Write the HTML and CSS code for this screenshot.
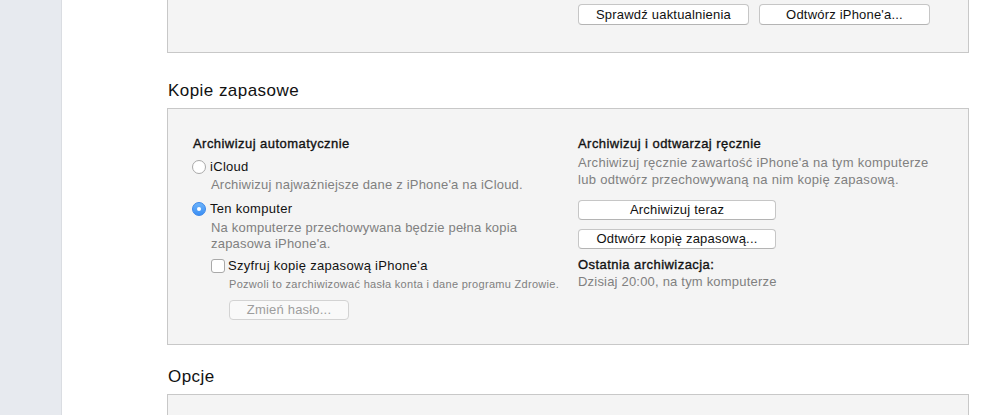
FILE: index.html
```html
<!DOCTYPE html>
<html lang="pl">
<head>
<meta charset="utf-8">
<title>Kopie zapasowe</title>
<link rel="stylesheet" href="styles.css">
</head>
<body>
<div class="app">
  <aside class="sidebar"></aside>
  <main class="content">
    <section class="box box-top">
      <div class="top-buttons">
        <button class="btn btn-top">Sprawdź uaktualnienia</button>
        <button class="btn btn-top">Odtwórz iPhone'a...</button>
      </div>
    </section>

    <h2 class="heading heading-first">Kopie zapasowe</h2>
    <section class="box backup">
      <div class="col col-left">
        <div class="title">Archiwizuj automatycznie</div>
        <label class="option opt-icloud"><span class="radio"></span><span class="label">iCloud</span></label>
        <div class="desc desc-icloud">Archiwizuj najważniejsze dane z iPhone'a na iCloud.</div>
        <label class="option opt-pc"><span class="radio checked"></span><span class="label">Ten komputer</span></label>
        <div class="desc desc-pc">Na komputerze przechowywana będzie pełna kopia<br>zapasowa iPhone'a.</div>
        <label class="option opt-encrypt"><span class="checkbox"></span><span class="label">Szyfruj kopię zapasową iPhone'a</span></label>
        <div class="small">Pozwoli to zarchiwizować hasła konta i dane programu Zdrowie.</div>
        <button class="btn btn-disabled">Zmień hasło...</button>
      </div>
      <div class="col col-right">
        <div class="title">Archiwizuj i odtwarzaj ręcznie</div>
        <div class="desc desc-manual">Archiwizuj ręcznie zawartość iPhone'a na tym komputerze<br>lub odtwórz przechowywaną na nim kopię zapasową.</div>
        <button class="btn btn-wide btn-first">Archiwizuj teraz</button>
        <button class="btn btn-wide btn-second">Odtwórz kopię zapasową...</button>
        <div class="title last-title">Ostatnia archiwizacja:</div>
        <div class="desc last-desc">Dzisiaj 20:00, na tym komputerze</div>
      </div>
    </section>

    <h2 class="heading heading-second">Opcje</h2>
    <section class="box options"></section>
  </main>
</div>
</body>
</html>
```

FILE: styles.css
```css
* { box-sizing: border-box; }
html, body { margin: 0; padding: 0; }
body {
  background: #ffffff;
  font-family: "Liberation Sans", Arial, sans-serif;
  font-size: 13px;
  letter-spacing: 0.2px;
  color: #111;
  width: 996px;
  height: 415px;
  overflow: hidden;
}
.app {
  display: flex;
  height: 415px;
}
.sidebar {
  width: 62px;
  flex: none;
  background: #e7eaef;
  border-right: 1px solid #dadde2;
}
.content {
  flex: 1;
  padding-left: 105px;
  padding-right: 27px;
}
.box {
  background: #f4f4f4;
  border: 1px solid #c8c8c8;
}
.box-top {
  border-top: 0;
  padding: 4px 0 27px 410px;
}
.top-buttons {
  display: flex;
  gap: 10px;
}
.btn {
  display: block;
  font-family: inherit;
  font-size: 13px;
  letter-spacing: 0.2px;
  color: #111;
  background: #ffffff;
  border: 1px solid #c6c6c6;
  border-bottom-color: #b4b4b4;
  border-radius: 4px;
  height: 20px;
  padding: 0;
  line-height: 18px;
  text-align: center;
}
.btn-top { width: 171px; height: 21px; line-height: 19px; }
.heading {
  font-size: 17px;
  font-weight: normal;
  letter-spacing: 0.45px;
  line-height: 20px;
  margin: 0 0 7px 1px;
  color: #111;
}
.heading-first { margin-top: 28px; }
.heading-second { margin-top: 22px; }
.backup {
  display: grid;
  grid-template-columns: 385px 1fr;
  padding: 27px 0 24px 25px;
}
.col { display: flex; flex-direction: column; align-items: flex-start; }
.title {
  line-height: 16px;
  color: #111;
  letter-spacing: 0.45px;
  -webkit-text-stroke: 0.35px #111;
}
.option {
  display: flex;
  align-items: center;
  line-height: 16px;
  color: #111;
}
.label { letter-spacing: 0.3px; }
.opt-icloud { margin-top: 7px; margin-left: -1px; }
.opt-pc { margin-top: 8px; margin-left: -1px; }
.opt-encrypt { margin-top: 6px; margin-left: 18px; }
.radio {
  width: 14px;
  height: 14px;
  border-radius: 50%;
  border: 1px solid #a9a9a9;
  background: #fff;
  margin-right: 4px;
  position: relative;
}
.radio.checked {
  background: linear-gradient(#6cb3fa, #3b8ff4);
  border-color: #3a86e8;
}
.radio.checked::after {
  content: "";
  position: absolute;
  left: 4px; top: 4px;
  width: 4px; height: 4px;
  border-radius: 50%;
  background: #fff;
}
.checkbox {
  width: 14px;
  height: 14px;
  border-radius: 3px;
  border: 1px solid #a9a9a9;
  background: #fff;
  margin-right: 3px;
}
.desc {
  color: #808080;
  line-height: 16px;
}
.desc-icloud { margin-top: 2px; margin-left: 18px; }
.desc-pc { margin-top: 3px; margin-left: 18px; }
.small {
  font-size: 11px;
  line-height: 14px;
  letter-spacing: 0.3px;
  color: #808080;
  margin-top: 3px;
  margin-left: 36px;
}
.btn-disabled {
  margin-top: 9px;
  margin-left: 36px;
  width: 120px;
  color: #9d9d9d;
  background: #f9f9f9;
  border-color: #d3d3d3;
}
.desc-manual { margin-top: 2px; line-height: 17px; letter-spacing: 0.3px; }
.btn-wide { width: 198px; }
.btn-first { margin-top: 12px; }
.btn-second { margin-top: 9px; }
.last-title { margin-top: 8px; }
.last-desc { margin-top: 1px; }
.options {
  height: 40px;
  border-bottom: 0;
}
```
